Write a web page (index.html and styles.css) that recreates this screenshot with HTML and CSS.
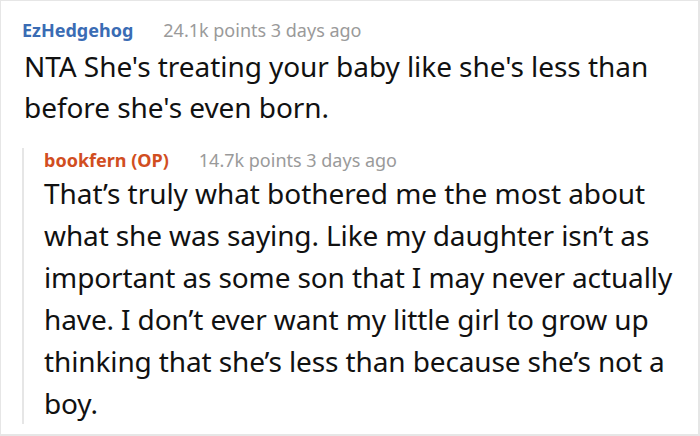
FILE: index.html
```html
<!DOCTYPE html>
<html>
<head>
<meta charset="utf-8">
<link rel="stylesheet" href="styles.css">
</head>
<body>
<div class="frame">
  <div class="comment">
    <div class="meta">
      <span class="user user-blue">EzHedgehog</span>
      <span class="info">24.1k points 3 days ago</span>
    </div>
    <p class="text">NTA She's treating your baby like she's less than<br>before she's even born.</p>
    <div class="reply">
      <div class="meta meta-reply">
        <span class="user user-op">bookfern (OP)</span>
        <span class="info">14.7k points 3 days ago</span>
      </div>
      <p class="text text-reply">That’s truly what bothered me the most about<br><span class="cond">what she was saying. Like my daughter isn’t as<br>important as some son that I may never actually<br>have. I don’t ever want my little girl to grow up<br>thinking that she’s less than because she’s not a<br>boy.</span></p>
    </div>
  </div>
</div>
</body>
</html>
```

FILE: styles.css
```css
html, body {
  margin: 0;
  padding: 0;
  background: #ffffff;
}

.frame {
  width: 700px;
  height: 436px;
  box-sizing: border-box;
  border-style: solid;
  border-color: #e6e6e6;
  border-width: 1px 2px 2px 1px;
  overflow: hidden;
  font-family: "Noto Sans", "Open Sans", sans-serif;
}

.comment {
  padding: 17px 0 0 21px;
}

.meta {
  display: flex;
  align-items: baseline;
  gap: 30px;
  height: 24px;
  line-height: 24px;
  white-space: nowrap;
}

.user {
  font-size: 18px;
  font-weight: 700;
}

.user-blue {
  color: #3a6cb4;
}

.user-op {
  color: #d14e1f;
}

.info {
  font-size: 18px;
  color: #9a9a9a;
}

.text {
  margin: 4px 0 0;
  font-size: 28px;
  line-height: 41px;
  color: #111111;
  padding-left: 2px;
  white-space: nowrap;
  letter-spacing: -0.06px;
}

.reply {
  margin-top: 30px;
  border-left: 2px solid #e6e6e6;
  padding-left: 20px;
}

.meta-reply {
  margin-top: -10px;
}

.text-reply {
  margin: 0 0 -6px;
  line-height: 42px;
  padding-left: 0;
}

.cond {
  letter-spacing: -0.12px;
}
```
